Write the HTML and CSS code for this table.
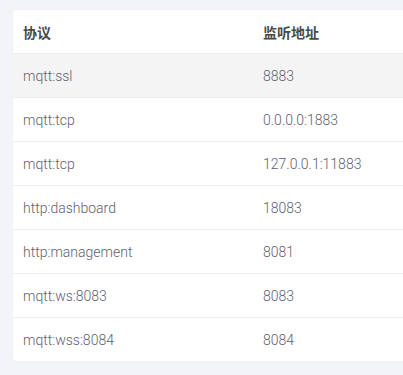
FILE: index.html
```html
<!DOCTYPE html>
<html>
<head>
<meta charset="utf-8">
<link rel="stylesheet" href="styles.css">
</head>
<body>
<div class="card">
  <table class="tbl">
    <thead>
      <tr><th class="c1">协议</th><th class="c2">监听地址</th></tr>
    </thead>
    <tbody>
      <tr class="hover"><td>mqtt:ssl</td><td>8883</td></tr>
      <tr><td>mqtt:tcp</td><td>0.0.0.0:1883</td></tr>
      <tr><td>mqtt:tcp</td><td>127.0.0.1:11883</td></tr>
      <tr><td>http:dashboard</td><td>18083</td></tr>
      <tr><td>http:management</td><td>8081</td></tr>
      <tr><td>mqtt:ws:8083</td><td>8083</td></tr>
      <tr class="last"><td>mqtt:wss:8084</td><td>8084</td></tr>
    </tbody>
  </table>
</div>
</body>
</html>
```
FILE: styles.css
```css
html, body {
  margin: 0;
  padding: 0;
  background: #f3f4f8;
  overflow: hidden;
}
body {
  padding: 10px 0 0 13px;
  font-family: Roboto, "Noto Sans CJK SC", sans-serif;
}
.card {
  width: calc(100vw - 13px);
  background: #fff;
  border-radius: 4px 0 0 4px;
  box-shadow: 0 0 2px rgba(0,0,0,0.04);
}
.tbl {
  width: 100%;
  border-collapse: collapse;
  table-layout: fixed;
}
.tbl th {
  text-align: left;
  font-size: 14px;
  font-weight: 700;
  color: #4a4a4a;
  height: 43px;
  padding: 0 10px;
  border-bottom: 1px solid #ebeef5;
}
.tbl .c1 { width: 220px; }
.tbl td {
  font-size: 14px;
  font-weight: 300;
  color: #5f6070;
  height: 43px;
  padding: 0 10px;
  border-bottom: 1px solid #ebeef5;
}
.tbl tr.hover td { background: #f4f4f4; }
.tbl tr.last td { border-bottom: none; }
```
